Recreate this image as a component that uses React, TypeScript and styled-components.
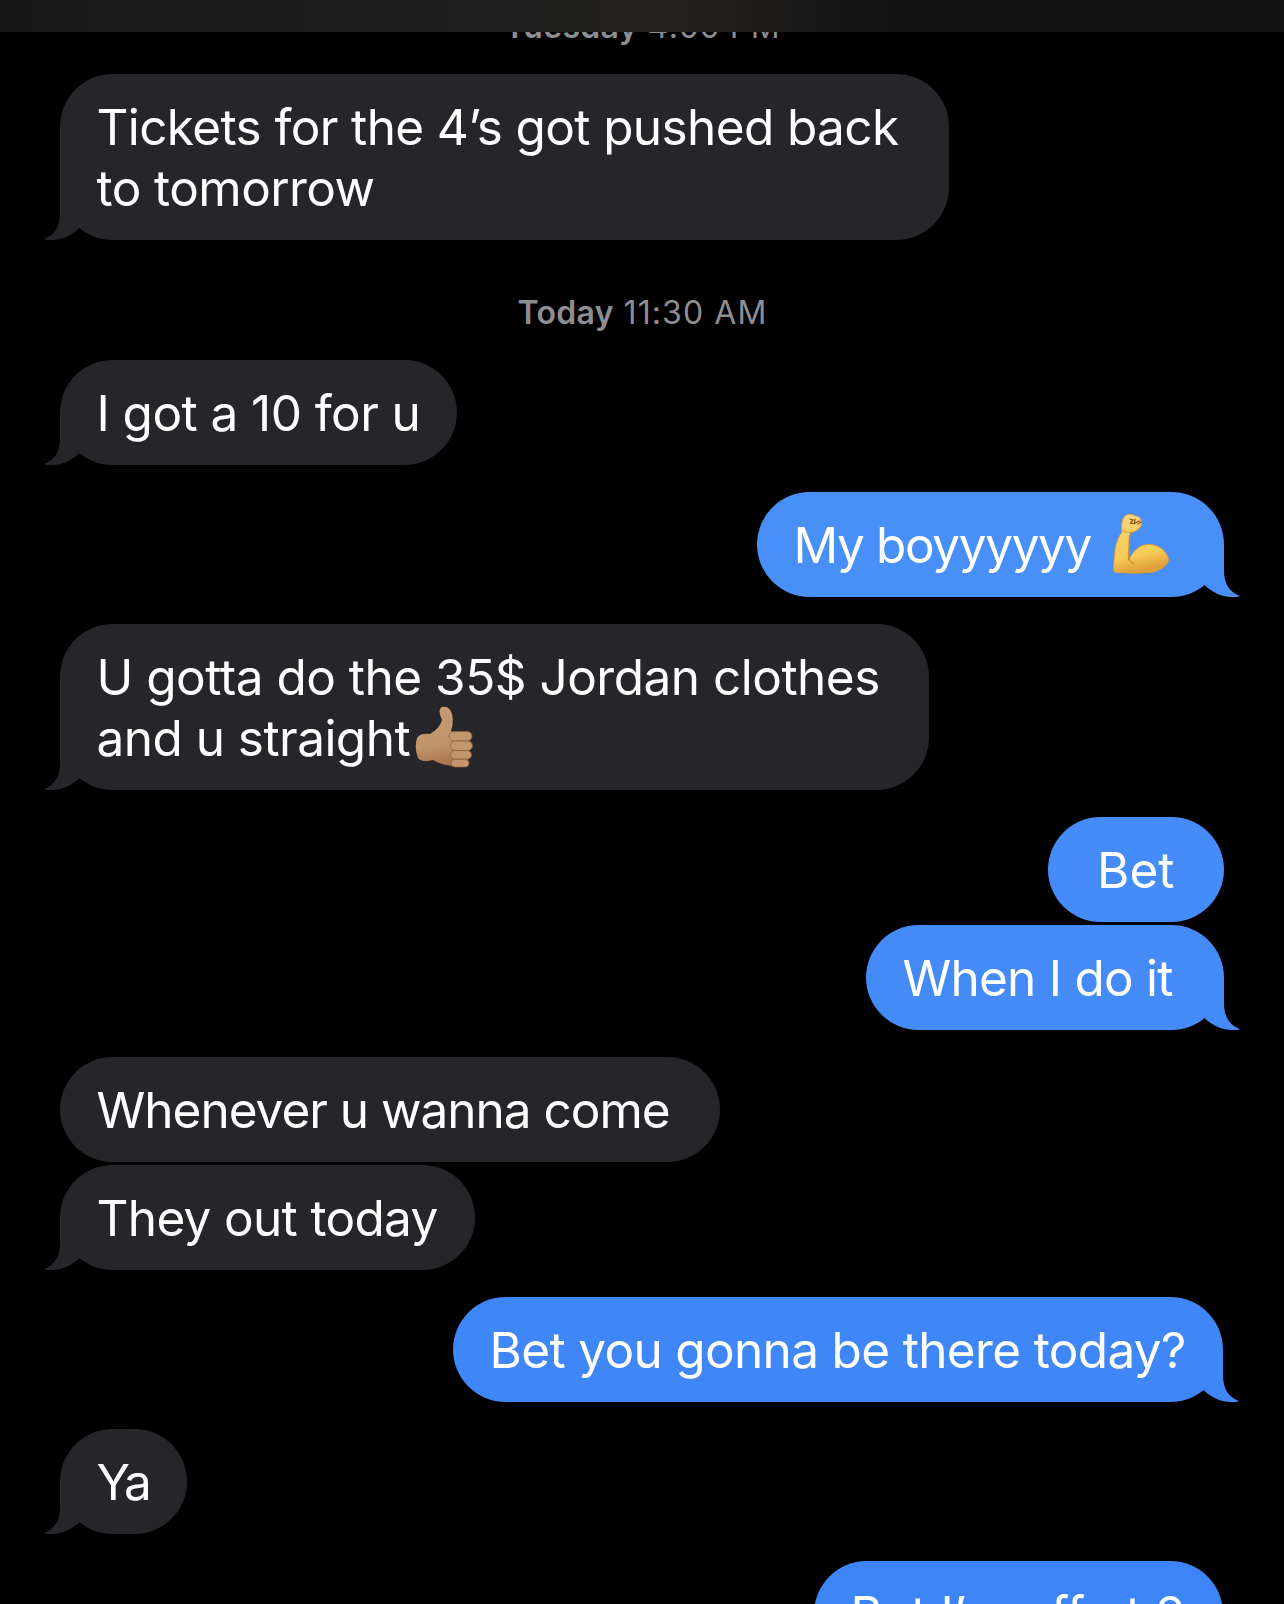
import React from 'react';
import styled, { createGlobalStyle } from 'styled-components';

const Global = createGlobalStyle`
  html, body { margin: 0; background: #000; }
  * { box-sizing: border-box; }
`;

const Screen = styled.main`
  width: 1284px;
  height: 1604px;
  overflow: hidden;
  display: flex;
  flex-direction: column;
  background: #000;
  color: #fff;
  font-family: Inter, "Liberation Sans", sans-serif;
`;

const Header = styled.header`
  height: 32px;
  flex: none;
  z-index: 1;
  background: linear-gradient(90deg, #161616 0, #19191a 90px, #1c1c1d 300px, #1e1e1e 480px, #22211f 600px, #22211e 690px, #1b1a19 780px, #141414 860px, #131313 1284px);
`;

const Stamp = styled.time<{ $top: number; $bottom: number }>`
  flex: none;
  display: flex;
  justify-content: center;
  gap: 10px;
  line-height: 40px;
  font-size: 32px;
  color: #8d8d93;
  margin: ${(p) => p.$top}px 0 ${(p) => p.$bottom}px;
`;

const Part = styled.span<{ $track: number; $bold?: boolean }>`
  font-weight: ${(p) => (p.$bold ? 600 : 400)};
  letter-spacing: ${(p) => p.$track}px;
  margin-right: ${(p) => -p.$track}px;
`;

const Row = styled.div<{ $mine?: boolean; $gap: number }>`
  flex: none;
  display: flex;
  justify-content: ${(p) => (p.$mine ? 'flex-end' : 'flex-start')};
  padding: 0 60px;
  margin-bottom: ${(p) => p.$gap}px;
`;

const Bubble = styled.div<{ $fill: string; $width: number; $indent: number; $shift: number }>`
  position: relative;
  width: ${(p) => p.$width}px;
  margin-right: ${(p) => p.$shift}px;
  padding: 23px 0 21px ${(p) => p.$indent}px;
  border-radius: 52.5px;
  background: ${(p) => p.$fill};
  color: #fff;
`;

const Line = styled.div`
  height: 61px;
  display: flex;
  align-items: center;
  white-space: pre;
  font-size: 49.5px;
  line-height: 61px;
`;

const Words = styled.span<{ $track: number }>`
  letter-spacing: ${(p) => p.$track}px;
`;

const TailShape = styled.svg<{ $mine?: boolean }>`
  position: absolute;
  bottom: 0;
  ${(p) => (p.$mine ? 'right: -16px; transform: scaleX(-1);' : 'left: -16px;')}
`;

const Emoji = styled.svg<{ $left: number; $drop: number }>`
  flex: none;
  margin-left: ${(p) => p.$left}px;
  margin-top: ${(p) => p.$drop}px;
`;

const Tail = ({ fill, mine }: { fill: string; mine?: boolean }) => (
  <TailShape $mine={mine} width="52" height="60" viewBox="0 0 52 60">
    <path d="M16 7V33C16 46 11 55 0 59C1 60 5 60 8 60C18 60 27 56 35.3 48.3L50 7Z" fill={fill} />
  </TailShape>
);

const Biceps = () => (
  <Emoji $left={21} $drop={-4} width="57" height="62" viewBox="0 0 57 62">
    <defs>
      <linearGradient id="arm" x1="0" y1="0" x2="0.2" y2="1">
        <stop offset="0" stopColor="#f8d888" />
        <stop offset="0.3" stopColor="#f7cf66" />
        <stop offset="0.75" stopColor="#f9cc57" />
        <stop offset="1" stopColor="#dfa13c" />
      </linearGradient>
    </defs>
    <path d="M12 4Q15 0 20 1.500L27 4Q30 6 29.500 12Q27 18 18 20L17 47C21 38 27 32 35 31.500C46 30.500 55 38 56.500 46C57 52 49 57 40 59.500Q21 61 3 59.500Q1 58 1.500 54L3 37Q5 25 10 19Q8.500 10 12 4Z" fill="url(#arm)" stroke="#d49a36" strokeWidth="0.8" />
    <path d="M17.500 22L16.500 46Q18 49 22 51" fill="none" stroke="#b87b20" strokeOpacity="0.75" strokeWidth="1.300" />
    <path d="M11 18Q15 20.500 22 18.500" fill="none" stroke="#d39a38" strokeWidth="1" />
    <path d="M18 6L21 7L18.500 10L21.500 10.500M23 6L22.500 10.500L27 8M26 11L29 9" fill="none" stroke="#825017" strokeWidth="1.200" strokeLinecap="round" />
  </Emoji>
);

const Thumb = () => (
  <Emoji $left={5} $drop={-3} width="58" height="62" viewBox="0 0 58 62">
    <defs>
      <linearGradient id="hand" x1="0" y1="0" x2="0.1" y2="1">
        <stop offset="0" stopColor="#c69b74" />
        <stop offset="0.7" stopColor="#c0946b" />
        <stop offset="1" stopColor="#a9764d" />
      </linearGradient>
    </defs>
    <path d="M2 32Q5 27 15 28Q25 22 27 14Q22 3 27 1Q34 -1 37 8Q39 16 36 25L42 27L41 60Q28 60 18 54Q7 57 3 52Q-1 42 2 32Z" fill="url(#hand)" />
    <g fill="#c3976e" stroke="#8d603d" strokeWidth="0.8">
      <rect x="34" y="25.500" width="23" height="9.500" rx="4.700" />
      <rect x="35.500" y="35" width="22" height="9.500" rx="4.700" />
      <rect x="35.500" y="44.500" width="21" height="8.700" rx="4.300" />
      <rect x="36" y="53.200" width="18" height="7.800" rx="3.900" />
    </g>
  </Emoji>
);

type Text = [string, number];
type Message = {
  lines: Text[];
  width: number;
  gap: number;
  mine?: boolean;
  tail?: boolean;
  fill?: string;
  indent?: number;
  shift?: number;
  emoji?: React.ReactNode;
};

const GREY = '#262529';

const Chat = ({ lines, width, gap, mine, tail = true, fill = GREY, indent = 36.5, shift = 0, emoji }: Message) => (
  <Row $mine={mine} $gap={gap}>
    <Bubble $fill={fill} $width={width} $indent={indent} $shift={shift}>
      {tail && <Tail fill={fill} mine={mine} />}
      {lines.map(([text, track], i) => (
        <Line key={text}>
          <Words $track={track}>{text}</Words>
          {i === lines.length - 1 && emoji}
        </Line>
      ))}
    </Bubble>
  </Row>
);

const messages: Message[] = [
  { lines: [['I got a 10 for u', -0.56]], width: 397, gap: 27 },
  { lines: [['My boyyyyyy', -1.38]], width: 467, gap: 27, mine: true, fill: '#488ff8', emoji: <Biceps /> },
  { lines: [['U gotta do the 35$ Jordan clothes', -0.5], ['and u straight', -0.53]], width: 889 - 20, gap: 27, emoji: <Thumb /> },
  { lines: [['Bet', 0]], width: 176, gap: 3, mine: true, tail: false, fill: '#458cf8', indent: 49 },
  { lines: [['When I do it', -0.76]], width: 358, gap: 27, mine: true, fill: '#448bf8' },
  { lines: [['Whenever u wanna come', -1]], width: 660, gap: 3, tail: false },
  { lines: [['They out today', -0.67]], width: 415, gap: 27 },
  { lines: [['Bet you gonna be there today?', -0.66]], width: 770, gap: 27, mine: true, shift: 1, fill: '#3f87f7' },
  { lines: [['Ya', -2.5]], width: 127, gap: 27 },
  { lines: [['Bet I’m off at 2', -0.35]], width: 409, gap: 0, mine: true, shift: 1, fill: '#3d85f7' },
];

export default function App() {
  return (
    <>
      <Global />
      <Screen>
        <Header />
        <Stamp $top={-25} $bottom={27}>
          <Part $track={0.3} $bold>Tuesday</Part>
          <Part $track={0.6}>4:00 PM</Part>
        </Stamp>
        <Chat lines={[['Tickets for the 4’s got pushed back', -0.62], ['to tomorrow', -0.57]]} width={889} gap={0} />
        <Stamp $top={53} $bottom={27}>
          <Part $track={0.3} $bold>Today</Part>
          <Part $track={1.1}>11:30 AM</Part>
        </Stamp>
        {messages.map((m) => (
          <Chat key={m.lines[0][0]} {...m} />
        ))}
      </Screen>
    </>
  );
}
